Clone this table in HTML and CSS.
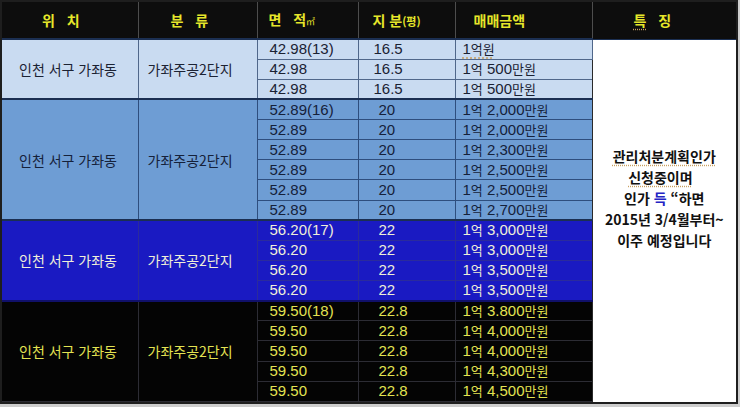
FILE: index.html
```html
<!DOCTYPE html>
<html lang="ko">
<head>
<meta charset="utf-8">
<link rel="stylesheet" href="styles.css">
</head>
<body>
<div class="frame">
<table class="grid">
<colgroup>
<col class="c1"><col class="c2"><col class="c3"><col class="c4"><col class="c5"><col class="c6">
</colgroup>
<thead>
<tr class="head">
<th class="h1">위&nbsp;&nbsp;&nbsp;치</th>
<th class="h2">분&nbsp;&nbsp;&nbsp;류</th>
<th class="h3">면&nbsp;&nbsp;&nbsp;적<span class="unit">㎡</span></th>
<th class="h4">지&nbsp;분<span class="unit2">(평)</span></th>
<th class="h5">매매금액</th>
<th class="h6"><span class="sp">특</span>&nbsp;&nbsp;&nbsp;징</th>
</tr>
</thead>
<tbody>
<tr class="s1 first">
<td rowspan="3" class="loc">인천 서구 가좌동</td>
<td rowspan="3" class="apt">가좌주공2단지</td>
<td class="area">42.98(13)</td><td class="share">16.5</td><td class="price"><span class="sp">1<span class="k">억원</span></span></td>
<td rowspan="18" class="note">
<div class="sp">관리처분계획인가</div>
<div><span class="sp">신청중이며</span>&nbsp;&nbsp;</div>
<div>인가 <span class="blue">득</span> “하면</div>
<div>2015년 3/4월부터~</div>
<div>이주 예정입니다</div>
</td>
</tr>
<tr class="s1"><td class="area">42.98</td><td class="share">16.5</td><td class="price">1<span class="k">억</span> 500<span class="k">만원</span></td></tr>
<tr class="s1"><td class="area">42.98</td><td class="share">16.5</td><td class="price">1<span class="k">억</span> 500<span class="k">만원</span></td></tr>

<tr class="s2 first">
<td rowspan="6" class="loc">인천 서구 가좌동</td>
<td rowspan="6" class="apt">가좌주공2단지</td>
<td class="area">52.89(16)</td><td class="share">20</td><td class="price">1<span class="k">억</span> 2,000<span class="k">만원</span></td>
</tr>
<tr class="s2"><td class="area">52.89</td><td class="share">20</td><td class="price">1<span class="k">억</span> 2,000<span class="k">만원</span></td></tr>
<tr class="s2"><td class="area">52.89</td><td class="share">20</td><td class="price">1<span class="k">억</span> 2,300<span class="k">만원</span></td></tr>
<tr class="s2"><td class="area">52.89</td><td class="share">20</td><td class="price">1<span class="k">억</span> 2,500<span class="k">만원</span></td></tr>
<tr class="s2"><td class="area">52.89</td><td class="share">20</td><td class="price">1<span class="k">억</span> 2,500<span class="k">만원</span></td></tr>
<tr class="s2"><td class="area">52.89</td><td class="share">20</td><td class="price">1<span class="k">억</span> 2,700<span class="k">만원</span></td></tr>

<tr class="s3 first">
<td rowspan="4" class="loc">인천 서구 가좌동</td>
<td rowspan="4" class="apt">가좌주공2단지</td>
<td class="area">56.20(17)</td><td class="share">22</td><td class="price">1<span class="k">억</span> 3,000<span class="k">만원</span></td>
</tr>
<tr class="s3"><td class="area">56.20</td><td class="share">22</td><td class="price">1<span class="k">억</span> 3,000<span class="k">만원</span></td></tr>
<tr class="s3"><td class="area">56.20</td><td class="share">22</td><td class="price">1<span class="k">억</span> 3,500<span class="k">만원</span></td></tr>
<tr class="s3"><td class="area">56.20</td><td class="share">22</td><td class="price">1<span class="k">억</span> 3,500<span class="k">만원</span></td></tr>

<tr class="s4 first">
<td rowspan="5" class="loc">인천 서구 가좌동</td>
<td rowspan="5" class="apt">가좌주공2단지</td>
<td class="area">59.50(18)</td><td class="share">22.8</td><td class="price">1<span class="k">억</span> 3.800<span class="k">만원</span></td>
</tr>
<tr class="s4"><td class="area">59.50</td><td class="share">22.8</td><td class="price">1<span class="k">억</span> 4,000<span class="k">만원</span></td></tr>
<tr class="s4"><td class="area">59.50</td><td class="share">22.8</td><td class="price">1<span class="k">억</span> 4,000<span class="k">만원</span></td></tr>
<tr class="s4"><td class="area">59.50</td><td class="share">22.8</td><td class="price">1<span class="k">억</span> 4,300<span class="k">만원</span></td></tr>
<tr class="s4"><td class="area">59.50</td><td class="share">22.8</td><td class="price">1<span class="k">억</span> 4,500<span class="k">만원</span></td></tr>
</tbody>
</table>
</div>
</body>
</html>
```
FILE: styles.css
```css
* { box-sizing: border-box; }
html, body { margin: 0; padding: 0; }
body {
  width: 740px;
  height: 407px;
  overflow: hidden;
  background: #cdcdcd;
  font-family: "Liberation Sans", "Noto Sans CJK KR", sans-serif;
}
.frame {
  width: 738px;
  height: 404px;
  border: 2px solid #1e1e1e;
  background: #ffffff;
}
.grid {
  width: 734px;
  height: 400px;
  border-collapse: collapse;
  table-layout: fixed;
}
.c1 { width: 136px; }
.c2 { width: 119px; }
.c3 { width: 101px; }
.c4 { width: 97px; }
.c5 { width: 137px; }
.c6 { width: 144px; }

.head th {
  height: 37px;
  padding: 0;
  background: #0d0d0d;
  color: #e6e62a;
  font-family: "Noto Sans CJK KR", "Liberation Sans", sans-serif;
  font-weight: bold;
  font-size: 14px;
  line-height: 18px;
  text-align: left;
  white-space: nowrap;
  border-left: 1px solid #4d4d4d;
  border-bottom: 1px solid #1b2f52;
}
.head th.h1 { border-left: none; padding-left: 40px; }
.head th.h2 { padding-left: 32px; }
.head th.h3 { padding-left: 11px; }
.head th.h4 { padding-left: 14px; }
.head th.h5 { padding-left: 18px; }
.head th.h6 { padding-left: 41px; }
.unit { font-size: 9px; font-weight: normal; }
.unit2 { font-size: 11px; }

tbody tr { height: 20px; }
td {
  padding: 0;
  font-size: 15px;
  line-height: 18px;
  white-space: nowrap;
  vertical-align: middle;
}
td.loc, td.apt {
  font-family: "Noto Sans CJK KR", "Liberation Sans", sans-serif;
  font-size: 14px;
  border-left: none;
}
td.loc { padding-left: 17px; }
td.apt { padding-left: 9px; }
td.area { padding-left: 12px; }
td.share { padding-left: 20px; }
.s1 td.share { padding-left: 15px; }
td.price { padding-left: 7px; }
.k {
  font-family: "Noto Sans CJK KR", sans-serif;
  font-size: 13px;
}

.s1 td { background: #c9dbf1; color: #1b2233; border: 1px solid #50678a; }
.s2 td { background: #6e9dd4; color: #15213a; border: 1px solid #2e4e7e; }
.s3 td { background: #1a1ac2; color: #efefd8; border: 1px solid #2b2b9c; }
.s4 td { background: #040404; color: #e3e352; border: 1px solid #2c2c34; }
.first td { border-top: 2px solid #1b2f52; }
.s4.first td { border-top: 2px solid #10106a; }
tr td.loc { border-left: none; }

td.note {
  background: #ffffff;
  color: #111111;
  border: none;
  border-left: 1px solid #2a2a2a;
  font-family: "Noto Sans CJK KR", "Liberation Sans", sans-serif;
  font-weight: bold;
  font-size: 14px;
  line-height: 21px;
  text-align: center;
  padding: 0 0 44px 0;
}
.s1 td.note { background: #ffffff; border: none; border-left: 1px solid #2a2a2a; }
.blue { color: #2424c4; }
.sp {
  text-decoration: underline dotted #c8a060;
  text-underline-offset: 3px;
}
```
